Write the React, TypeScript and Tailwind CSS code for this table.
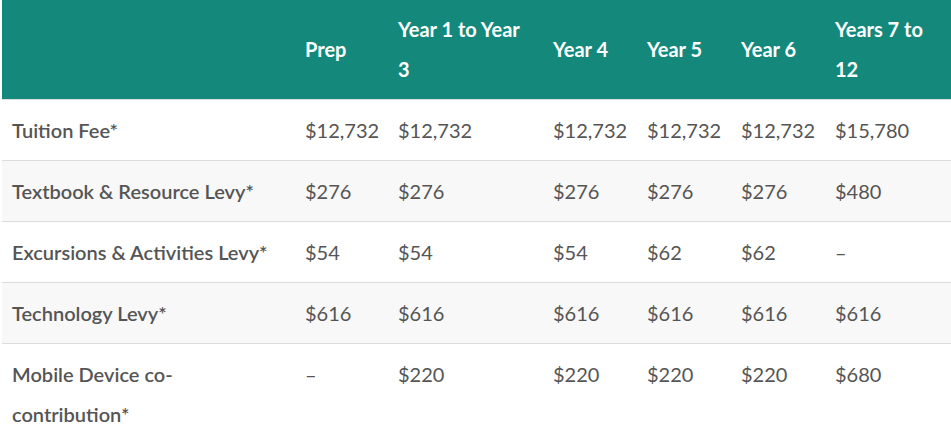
const headers = ["", "Prep", "Year 1 to Year 3", "Year 4", "Year 5", "Year 6", "Years 7 to 12"];

const rows: string[][] = [
  ["Tuition Fee*", "$12,732", "$12,732", "$12,732", "$12,732", "$12,732", "$15,780"],
  ["Textbook & Resource Levy*", "$276", "$276", "$276", "$276", "$276", "$480"],
  ["Excursions & Activities Levy*", "$54", "$54", "$54", "$62", "$62", "–"],
  ["Technology Levy*", "$616", "$616", "$616", "$616", "$616", "$616"],
  ["Mobile Device co-contribution*", "–", "$220", "$220", "$220", "$220", "$680"],
];

const widths = ["w-[293px]", "w-[93px]", "w-[155px]", "w-[94px]", "w-[94px]", "w-[94px]", "w-[126px]"];

export default function App() {
  return (
    <div className="min-h-screen bg-white pl-[2px] font-['Lato',sans-serif]">
      <table className="w-[949px] table-fixed border-collapse text-[20px]">
        <colgroup>
          {widths.map((w, i) => (
            <col key={i} className={w} />
          ))}
        </colgroup>
        <thead>
          <tr className="bg-[#14897b]">
            {headers.map((h, i) => (
              <th
                key={i}
                className="h-[99px] px-[10px] py-[9px] text-left align-middle font-bold leading-[40px] text-white"
              >
                {h}
              </th>
            ))}
          </tr>
        </thead>
        <tbody>
          {rows.map((r, ri) => (
            <tr key={ri} className={`border-t border-[#dddddd] ${ri % 2 === 1 ? "bg-[#f8f8f8]" : "bg-white"}`}>
              {r.map((c, ci) => (
                <td
                  key={ci}
                  className={`px-[10px] py-[10px] align-top leading-[40px] text-[#555555] ${ci === 0 ? "font-semibold" : "font-normal"}`}
                >
                  {c}
                </td>
              ))}
            </tr>
          ))}
        </tbody>
      </table>
    </div>
  );
}
